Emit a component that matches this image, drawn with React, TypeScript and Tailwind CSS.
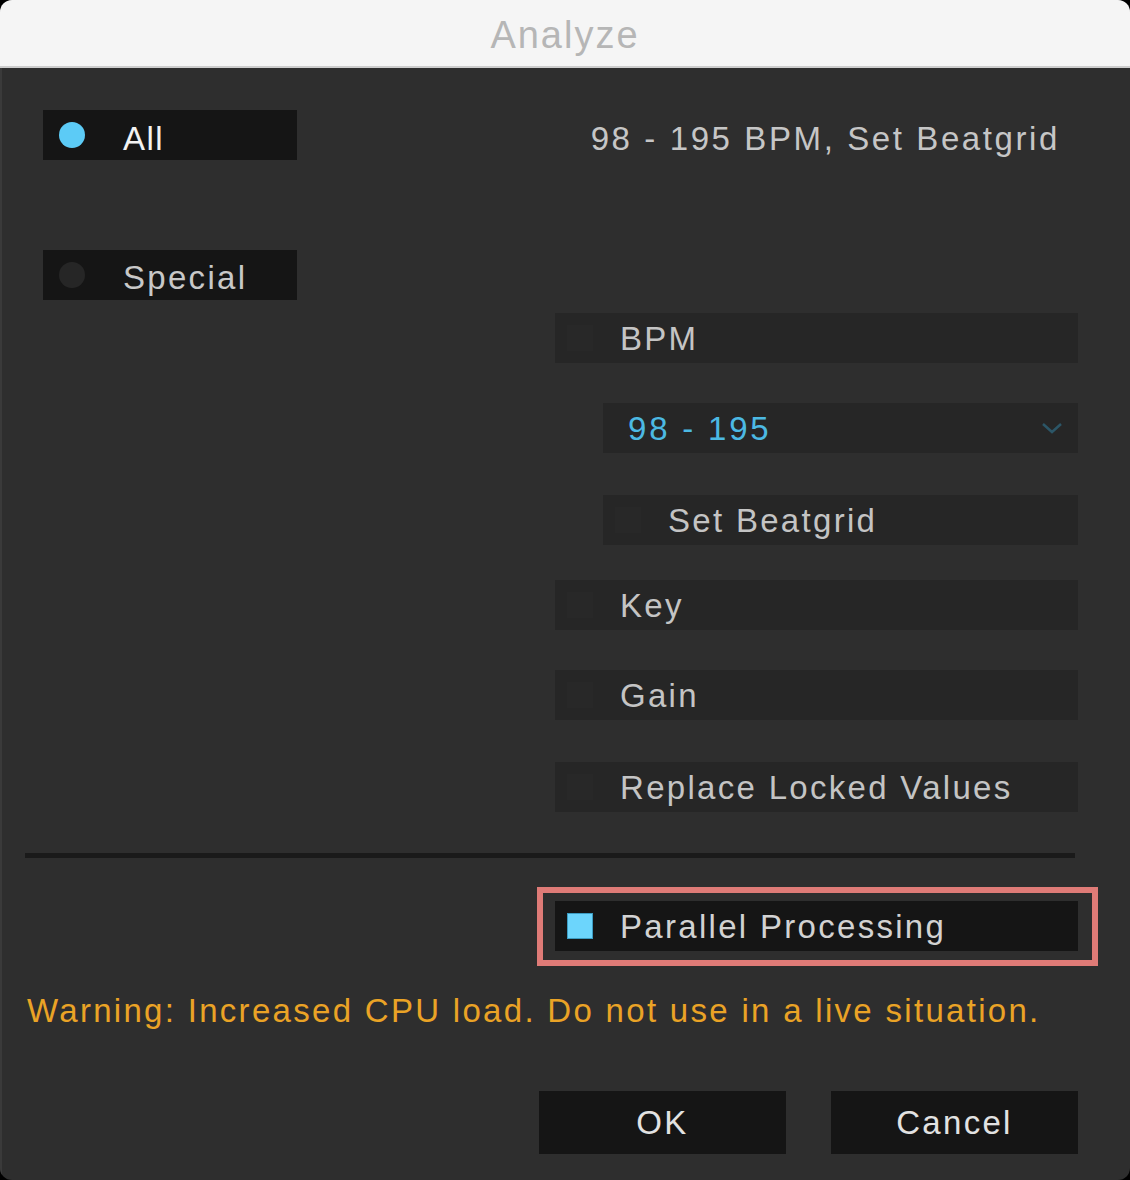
import React from "react";

const font = { fontFamily: '"Liberation Sans", Arial, sans-serif' };

function CheckRow({ label, indent = false }: { label: string; indent?: boolean }) {
  return (
    <div
      className={`${indent ? "ml-[603px] w-[475px]" : "ml-[555px] w-[523px]"} pl-[12px] h-[50px] bg-[#262626] flex items-center`}
    >
      <div className="w-[26px] h-[26px] bg-[#282828]" />
      <span className="ml-[27px] text-[33px] tracking-[2.3px] text-[#c4c4c4] leading-none">{label}</span>
    </div>
  );
}

export default function App() {
  return (
    <div className="w-[1130px] h-[1180px] bg-black" style={font}>
      <div className="w-[1130px] h-[1180px] rounded-[12px] overflow-hidden flex flex-col bg-[#2e2e2e]">
        {/* Title bar */}
        <div className="h-[68px] shrink-0 bg-[#f5f5f5] border-b-[2px] border-[#cdcdcd] flex items-center justify-center">
          <span className="text-[38px] tracking-[2px] text-[#b6b6b6] leading-none mt-[4px]">Analyze</span>
        </div>

        {/* Body */}
        <div className="flex-1 flex flex-col items-start border-l-[2px] border-[#3a3a3a]">
          {/* All row + summary */}
          <div className="mt-[42px] w-full flex items-center">
            <div className="ml-[41px] w-[254px] h-[50px] bg-[#151515] flex items-center pl-[16px]">
              <div className="w-[26px] h-[26px] rounded-full bg-[#5ccbf6]" />
              <span className="ml-[38px] mt-[6px] text-[33px] tracking-[1.5px] text-[#f2f2f2] leading-none">All</span>
            </div>
            <span className="ml-auto mr-[70px] mt-[7px] text-[33px] tracking-[2.6px] text-[#c6c6c6] leading-none">
              98 - 195 BPM, Set Beatgrid
            </span>
          </div>

          {/* Special row */}
          <div className="mt-[90px] ml-[41px] w-[254px] h-[50px] bg-[#151515] flex items-center pl-[16px]">
            <div className="w-[26px] h-[26px] rounded-full bg-[#262626]" />
            <span className="ml-[38px] mt-[4px] text-[33px] tracking-[2.3px] text-[#c8c8c8] leading-none">Special</span>
          </div>

          {/* BPM */}
          <div className="mt-[13px] -ml-[2px]">
            <CheckRow label="BPM" />
          </div>

          {/* Dropdown */}
          <div className="mt-[40px] -ml-[2px]">
            <div className="ml-[603px] w-[475px] h-[50px] bg-[#262626] flex items-center pl-[25px] pr-[15px]">
              <span className="text-[33px] tracking-[2.8px] text-[#4cb9e3] leading-none">98 - 195</span>
              <svg className="ml-auto" width="22" height="12" viewBox="0 0 22 12">
                <polyline points="2,2 11,10 20,2" fill="none" stroke="#2c5667" strokeWidth="2.5" />
              </svg>
            </div>
          </div>

          {/* Set Beatgrid */}
          <div className="mt-[42px] -ml-[2px]">
            <CheckRow label="Set Beatgrid" indent />
          </div>

          <div className="mt-[35px] -ml-[2px]">
            <CheckRow label="Key" />
          </div>
          <div className="mt-[40px] -ml-[2px]">
            <CheckRow label="Gain" />
          </div>
          <div className="mt-[42px] -ml-[2px]">
            <CheckRow label="Replace Locked Values" />
          </div>

          {/* Separator */}
          <div className="mt-[41px] ml-[23px] w-[1050px] h-[5px] bg-[#1a1a1a]" />

          {/* Parallel processing (highlighted) */}
          <div className="mt-[29px] ml-[535px] w-[561px] h-[79px] border-[6px] border-[#df7b77] pl-[12px] pt-[8px]">
            <div className="w-[523px] h-[50px] bg-[#151515] flex items-center pl-[12px]">
              <div className="w-[26px] h-[26px] bg-[#6cd5fc] border border-[#3c9cc2]" />
              <span className="ml-[27px] text-[33px] tracking-[2.3px] text-[#d2d2d2] leading-none">
                Parallel Processing
              </span>
            </div>
          </div>

          {/* Warning */}
          <div className="mt-[26px] ml-[25px] h-[36px] flex items-center text-[33px] tracking-[2.3px] text-[#eaa326] leading-none whitespace-nowrap">
            Warning: Increased CPU load. Do not use in a live situation.
          </div>

          {/* Buttons */}
          <div className="mt-[63px] ml-[537px] flex gap-[45px]">
            <div className="w-[247px] h-[63px] bg-[#151515] flex items-center justify-center">
              <span className="text-[33px] tracking-[2.3px] text-[#e2e2e2] leading-none">OK</span>
            </div>
            <div className="w-[247px] h-[63px] bg-[#151515] flex items-center justify-center">
              <span className="text-[33px] tracking-[2.3px] text-[#e2e2e2] leading-none">Cancel</span>
            </div>
          </div>
        </div>
      </div>
    </div>
  );
}
